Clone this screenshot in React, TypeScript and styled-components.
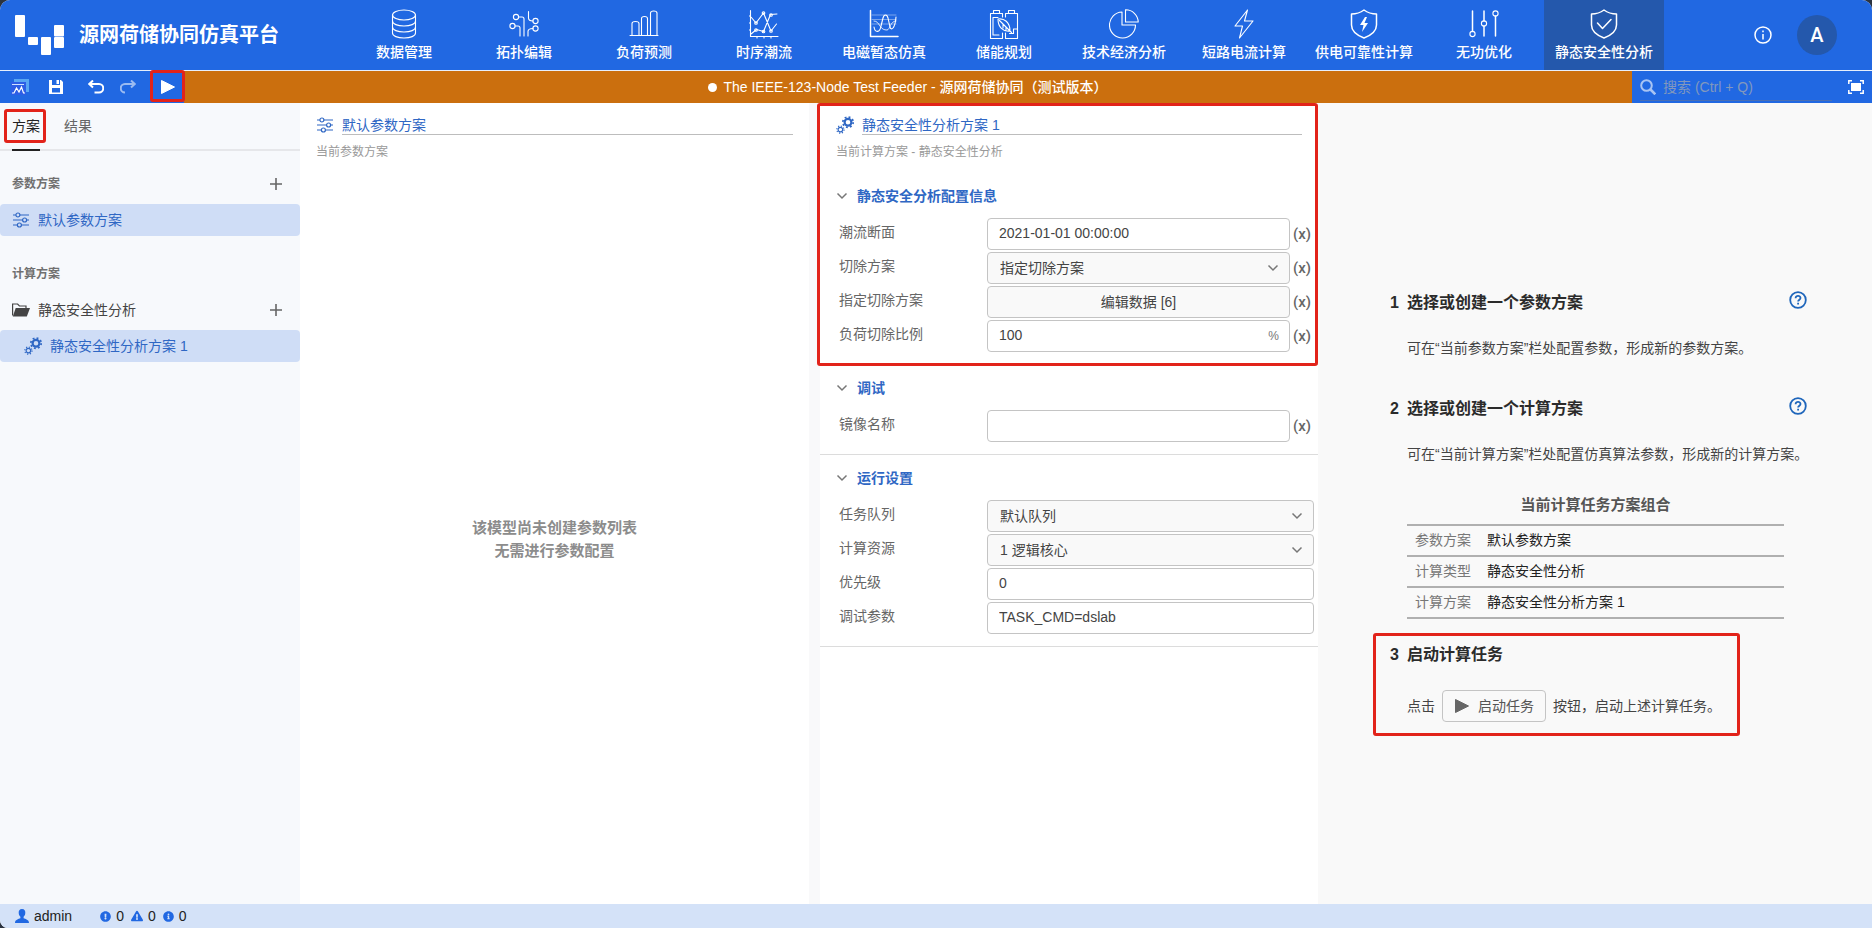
import React from 'react';
import styled, { createGlobalStyle, css } from 'styled-components';
import { FaExclamationCircle, FaExclamationTriangle, FaInfoCircle } from 'react-icons/fa';

const blue = '#2168e2';
const link = '#2f67c4';
const line = '#c4c4c4';

const GlobalStyle = createGlobalStyle`
  *, *::before, *::after { box-sizing: border-box; }
  body {
    margin: 0;
    background: #2b3340;
    color: #444;
    font: 14px/20px "Liberation Sans", "Noto Sans CJK SC", sans-serif;
  }
  button, input, select { font: inherit; color: inherit; margin: 0; }
  h1, h2, h3, p, ol, ul { margin: 0; padding: 0; }
  ol, ul { list-style: none; }
  svg { display: block; flex: none; }
`;

const Page = styled.div`
  display: flex;
  flex-direction: column;
  min-height: 100vh;
  overflow: hidden;
  border-radius: 10px 10px 0 8px;
  background: #fff;
`;

const Callout = styled.span<{ $inset: string }>`
  position: absolute;
  inset: ${(p) => p.$inset};
  border: 3px solid #e2231a;
  border-radius: 3px;
  pointer-events: none;
  z-index: 2;
`;
const FormCallout = styled(Callout)`
  height: 263px;
`;

/* Header */
const Header = styled.header`
  display: flex;
  height: 70px;
  background: ${blue};
  color: #fff;
`;
const Brand = styled.div`
  display: flex;
  align-items: center;
  gap: 14px;
  flex: 1 0 344px;
  padding-left: 15px;
`;
const BrandName = styled.h1`
  font-size: 20px;
  line-height: 28px;
  font-weight: 700;
`;
const Modules = styled.nav`
  display: flex;
`;
const Module = styled.a<{ $active?: boolean }>`
  display: flex;
  flex-direction: column;
  align-items: center;
  gap: 3px;
  width: 120px;
  padding-top: 9px;
  color: #fff;
  font-weight: 500;
  text-decoration: none;
  white-space: nowrap;
  background: ${(p) => (p.$active ? '#2458ac' : 'transparent')};
`;
const Account = styled.div`
  display: flex;
  align-items: center;
  justify-content: flex-end;
  gap: 25px;
  flex: 0 0 208px;
  padding-right: 35px;
`;
const InfoButton = styled.button`
  padding: 0;
  border: 0;
  background: none;
`;
const Avatar = styled.button`
  width: 40px;
  height: 40px;
  padding: 0;
  border: 0;
  border-radius: 50%;
  background: #2458ac;
  font-family: Roboto, sans-serif;
  font-size: 20px;
  font-weight: 500;
`;

/* Toolbar */
const Toolbar = styled.div`
  display: flex;
  height: 33px;
  border-top: 1px solid #e8effc;
  background: ${blue};
  color: #fff;
`;
const Tools = styled.div`
  display: flex;
  gap: 8px;
  padding-left: 8px;
`;
const ToolGroup = styled.div`
  display: flex;
`;
const Tool = styled.button`
  position: relative;
  display: grid;
  place-items: center;
  width: 32px;
  padding: 0;
  border: 0;
  background: none;
  &:disabled { opacity: 0.55; color: #fff; }
`;
const LogoTool = styled(Tool)`
  width: 24px;
`;
const DocumentTitle = styled.div`
  display: flex;
  align-items: center;
  justify-content: center;
  gap: 6px;
  flex: 1;
  background: #cb6f0e;
  font-weight: 500;
`;
const DirtyDot = styled.span`
  width: 9px;
  height: 9px;
  border-radius: 50%;
  background: #fff;
`;
const Search = styled.div`
  display: flex;
  align-items: center;
  flex: 0 0 240px;
  min-width: 0;
  padding: 0 8px;
`;
const SearchField = styled.label`
  display: flex;
  align-items: center;
  gap: 7px;
  flex: 1;
  min-width: 0;
  height: 28px;
  margin-right: 16px;
  border-bottom: 1px solid #4a6fb4;
  color: #a9c4f3;
`;
const SearchInput = styled.input`
  flex: 1;
  width: 100%;
  min-width: 0;
  padding: 0;
  border: 0;
  outline: 0;
  background: none;
  &::placeholder { color: #8298bd; }
`;
const FullscreenButton = styled(InfoButton)``;

/* Body */
const Body = styled.main`
  display: grid;
  grid-template-columns: 300px minmax(0, 509fr) 11px minmax(0, 498fr) minmax(0, 554fr);
  flex: 1;
`;
const Sidebar = styled.aside`
  background: #f7f9fc;
`;
const Tabs = styled.div`
  display: flex;
  gap: 24px;
  height: 48px;
  padding-left: 12px;
  border-bottom: 2px solid #e6e7ea;
  margin-bottom: 17px;
`;
const Tab = styled.button<{ $active?: boolean }>`
  position: relative;
  height: 48px;
  padding: 0;
  border: solid transparent;
  border-width: 0 0 2px;
  background: none;
  color: #666;
  ${(p) => p.$active && css`color: #222; border-color: #222;`}
`;
const GroupHead = styled.div`
  display: flex;
  align-items: center;
  justify-content: space-between;
  height: 32px;
  margin-bottom: 4px;
  padding: 0 18px 0 12px;
`;
const GroupName = styled.h2`
  font-size: 12px;
  line-height: 16px;
  font-weight: 700;
  color: #707070;
`;
const AddButton = styled.button`
  padding: 0;
  border: 0;
  background: none;
  color: #666;
`;
const FolderName = styled.span`
  display: flex;
  align-items: center;
  gap: 8px;
`;
const SchemeItem = styled.button<{ $nested?: boolean }>`
  display: flex;
  align-items: center;
  gap: 8px;
  width: 100%;
  height: 32px;
  margin: ${(p) => (p.$nested ? 0 : 1)}px 0 22px;
  padding: 0 0 0 ${(p) => (p.$nested ? 24 : 12)}px;
  border: 0;
  border-radius: 4px;
  background: #cfddf6;
  color: ${link};
`;

const Panel = styled.section`
  position: relative;
  display: flex;
  flex-direction: column;
`;
const Divider = styled.div`
  background: #f9f9fa;
`;
const PanelHead = styled.div`
  padding: 12px 16px 13px;
`;
const PanelTitle = styled.label`
  display: flex;
  align-items: center;
  gap: 8px;
  margin-bottom: 9px;
  color: ${link};
`;
const PanelName = styled.input`
  flex: 1;
  min-width: 0;
  height: 20px;
  padding: 0;
  border: 0;
  border-bottom: 1px solid #bdbdbd;
  outline: 0;
  background: none;
`;
const PanelNote = styled.p`
  font-size: 12px;
  line-height: 16px;
  color: #999;
`;
const Empty = styled.p`
  display: grid;
  place-content: center;
  flex: 1;
  text-align: center;
  font-size: 15px;
  line-height: 23px;
  font-weight: 700;
  color: #8c8c8c;
`;

const Section = styled.section`
  padding: 0 4px 12px 16px;
  border-bottom: 1px solid #dcdcdc;
`;
const SectionToggle = styled.button`
  display: flex;
  align-items: center;
  gap: 9px;
  height: 45px;
  padding: 0;
  border: 0;
  background: none;
  font-weight: 700;
  color: ${link};
`;
const Rows = styled.div`
  display: grid;
  gap: 2px;
`;
const Row = styled.div`
  display: grid;
  grid-template-columns: 148px minmax(0, 1fr) auto;
  padding-left: 3px;
`;
const RowLabel = styled.label`
  align-self: center;
  padding-bottom: 4px;
  color: #666;
`;
const Control = styled.div`
  position: relative;
  display: flex;
`;
const field = css`
  width: 100%;
  height: 32px;
  padding: 0 12px;
  border: 1px solid ${line};
  border-radius: 4px;
  outline: 0;
  color: #444;
`;
const TextInput = styled.input`
  ${field}
  padding: 0 11px 2px;
  background: #fff;
`;
const Select = styled.select`
  ${field}
  appearance: none;
  background: #f9f9f9;
`;
const DataButton = styled.button`
  ${field}
  background: #f9f9f9;
`;
const Adornment = styled.span`
  position: absolute;
  top: 0;
  right: 11px;
  display: flex;
  align-items: center;
  height: 32px;
  font-size: 12px;
  color: #777;
  pointer-events: none;
`;
const BindButton = styled.button`
  width: 24px;
  padding: 0;
  border: 0;
  background: none;
  font-family: Roboto, sans-serif;
  font-weight: 500;
  font-size: 15px;
  color: #666;
`;

/* Guide */
const Guide = styled.aside`
  display: flex;
  flex-direction: column;
  align-items: center;
  justify-content: center;
  padding-top: 5px;
  background: #f9f9f9;
`;
const Steps = styled.ol`
  width: 424px;
`;
const Step = styled.li`
  position: relative;
  display: grid;
  grid-template-columns: 17px minmax(0, 1fr);
  padding-left: 7px;
  & + & { margin-top: 39px; }
  &:last-child { margin-top: 24px; }
`;
const StepText = styled.h2`
  font-size: 16px;
  line-height: 24px;
  font-weight: 700;
  color: #2b2b2b;
`;
const StepHead = styled.div`
  display: flex;
  justify-content: space-between;
  margin-bottom: 23px;
`;
const HelpButton = styled.button`
  height: 18px;
  padding: 0;
  border: 0;
  background: none;
  color: #1f66bb;
`;
const StepBody = styled.div`
  grid-column: 2;
  white-space: nowrap;
`;
const Summary = styled.table`
  width: calc(100% - 23px);
  margin-top: 31px;
  border-collapse: collapse;
  color: #222;
  caption {
    padding-bottom: 9px;
    font-size: 15px;
    font-weight: 700;
    color: #555;
  }
  tr { border: solid #b0b0b0; border-width: 2px 0; }
  th, td { height: 31px; padding: 0 8px; text-align: left; font-weight: 400; }
  th { width: 72px; color: #777; }
`;
const LaunchLine = styled.div`
  display: flex;
  align-items: center;
  gap: 7px;
`;
const LaunchButton = styled.button`
  display: flex;
  align-items: center;
  gap: 9px;
  height: 32px;
  padding: 0 11px 0 12px;
  border: 1px solid ${line};
  border-radius: 4px;
  background: #f9f9f9;
  color: #555;
`;

/* Status bar */
const Footer = styled.footer`
  display: flex;
  align-items: center;
  gap: 28px;
  height: 24px;
  padding-left: 15px;
  background: #d4e2f8;
  color: #222;
`;
const Counts = styled.div`
  display: flex;
  gap: 7px;
`;
const Count = styled.span`
  display: flex;
  align-items: center;
  gap: 5px;
  svg { color: ${blue}; }
`;

/* Icons */
const Logo = () => (
  <svg width="50" height="41" viewBox="0 0 50 41" fill="#fff" aria-hidden>
    <rect width="10" height="22" rx="1" />
    <rect x="13" y="22" width="10" height="8" rx="1" />
    <rect x="26" y="22" width="10" height="18" rx="1" />
    <rect x="39" y="10" width="10" height="11.500" rx="1" />
    <rect x="39" y="22" width="10" height="11" rx="1" />
  </svg>
);

const ModuleIcon = ({ children }: { children: React.ReactNode }) => (
  <svg width="30" height="30" viewBox="0 0 30 30" fill="none" stroke="#fff" strokeWidth="1.1" strokeLinejoin="round" strokeLinecap="round" aria-hidden>
    {children}
  </svg>
);

const modules = [
  {
    name: '数据管理',
    icon: (
      <>
        <ellipse cx="15" cy="6" rx="11.5" ry="5" />
        <path d="M3.500 6v18c0 3 5 5 11.500 5s11.500-2 11.500-5V6M3.500 12c0 3 5 5 11.500 5s11.500-2 11.500-5M3.500 18c0 3 5 5 11.500 5s11.500-2 11.500-5" />
      </>
    ),
  },
  {
    name: '拓扑编辑',
    icon: (
      <>
        <circle cx="7" cy="8" r="2.600" /><circle cx="3.500" cy="17" r="2.600" />
        <circle cx="26.500" cy="12" r="2.600" /><circle cx="26.500" cy="19.500" r="2.600" />
        <path d="M9.600 8H13c1.500 0 2 1 2 2v17M6 17h3c1.500 0 2 1 2 2v8M19.500 2.500V9c0 2 1 3 4.500 3M24 19.500c-4 0-5 1-5 3V27" />
      </>
    ),
  },
  {
    name: '负荷预测',
    icon: <path d="M1 26.500h28M3 26V14.500c0-1 1-2 3.500-2s3.500 1 3.500 2V26M12.500 26V9.500c0-1 1-2 3-2s3 1 3 2V26M21.500 26V4c0-1 1-2 3.200-2S28 3 28 4v22" />,
  },
  {
    name: '时序潮流',
    icon: (
      <>
        <path d="M1.500 1.500v26H29M1.500 7H0M1.500 14H0M1.500 21H0M8 27.500V29M15 27.500V29M22 27.500V29M2 8l5 6 7.500-10 7.500 18 5.500-7M2 25l5.500-4.500 7 2 7-17L28 5" />
        <circle cx="7" cy="14" r="1.300" /><circle cx="14.500" cy="4" r="1.300" /><circle cx="22" cy="22" r="1.300" />
        <circle cx="7" cy="21" r="1.300" /><circle cx="14.500" cy="22.500" r="1.300" /><circle cx="22" cy="6" r="1.300" />
      </>
    ),
  },
  {
    name: '电磁暂态仿真',
    icon: (
      <>
        <path d="M1.500 1.500v26H29" strokeWidth="1.500" />
        <path d="M3 6h24M3 10.500h24M3 15h24" opacity=".5" strokeWidth=".8" />
        <path d="M5 18c1 6 6 6 7-1l2-8c1-4 4-4 5 0l2 9c1 4 5 2 6-10" />
        <path d="M5 12c3 0 4 2 6 5s4 4 7 4 3-9 9-9" strokeWidth=".8" />
      </>
    ),
  },
  {
    name: '储能规划',
    icon: (
      <>
        <path d="M4.500 4V1.500h6V4M19.500 4V1.500h6V4M13.500 8V4.500h-12v25h12V24M16.500 8V4.500h12V20h-4v4.500h-4M16.500 24v5.500h12V20M4 8.500h5M4 8.500V26h6" />
        <path d="M9 10c6-1 12 3 12 12-7 1-12-4-12-12zM10.500 11.500l12 12M14 15v4M17 18v3" />
      </>
    ),
  },
  {
    name: '技术经济分析',
    icon: <path d="M13 3a13 13 0 1 0 13.500 13H13zM16.500.8V13h12.700A12.500 12.500 0 0 0 16.500.8z" />,
  },
  { name: '短路电流计算', icon: <path d="M18.500 1 6 17h7.500L10.500 29 24 12h-8.500z" /> },
  {
    name: '供电可靠性计算',
    icon: (
      <>
        <path d="M15 1c4 3 8 4 12.500 4v11c0 6-6 10.500-12.500 13C8.500 26.500 2.500 22 2.500 16V5C7 5 11 4 15 1z" strokeWidth="1.500" />
        <path d="M16 8l-5 8h3.500L13 23l6-9h-3.500L18 8z" fill="#fff" stroke="none" />
      </>
    ),
  },
  {
    name: '无功优化',
    icon: (
      <>
        <circle cx="3.500" cy="25" r="2.600" /><circle cx="15" cy="14.500" r="2.600" /><circle cx="26.500" cy="4.500" r="2.600" />
        <path d="M3.500 2v20.400M15 2v10M15 17.100V27M26.500 7.100V27" strokeWidth="1.500" />
      </>
    ),
  },
  {
    name: '静态安全性分析',
    icon: (
      <>
        <path d="M15 1c4 3 8 4 12.500 4v11c0 6-6 10.500-12.500 13C8.500 26.500 2.500 22 2.500 16V5C7 5 11 4 15 1z" strokeWidth="1.500" />
        <path d="M8.500 14l5 5.500L22 10.500" strokeWidth="1.500" />
      </>
    ),
  },
];

const InfoIcon = () => (
  <svg width="18" height="18" viewBox="0 0 18 18" fill="none" stroke="#fff" strokeWidth="1.500" aria-hidden>
    <circle cx="9" cy="9" r="8" />
    <path d="M9 8v5.500M9 4.500v1.700" />
  </svg>
);

const AppIcon = () => (
  <svg width="18" height="16" viewBox="0 0 18 16" fill="none" aria-hidden>
    <path d="M3 0h15v13h-3V3H3z" fill="#58a6f3" />
    <path d="M0 3h15v13H0z" fill="#2d5ee6" />
    <path d="M1 5.500h12" stroke="#cfe0ff" />
    <path d="M1 14h2l2.500-5 2.500 4 2.500-5 2 6H14" stroke="#fff" strokeWidth="1.200" />
  </svg>
);

const SaveIcon = () => (
  <svg width="14" height="14" viewBox="0 0 14 14" aria-hidden>
    <path fill="#fff" fillRule="evenodd" d="M0 0h3v5h8V0h1l2 2v12H0zM3 8v4.500h8V8zM7.500 0H10v4H7.500z" />
  </svg>
);

const UndoIcon = ({ redo }: { redo?: boolean }) => (
  <svg width="16" height="14" viewBox="0 0 16 14" fill="none" stroke="#fff" strokeWidth="2" aria-hidden>
    <path d={redo ? 'M14.500 4H5a4.200 4.200 0 0 0 0 8.500M11 .5 14.700 4 11 7.500' : 'M1.500 4H11a4.200 4.200 0 0 1 0 8.500H6.500M5 .5 1.300 4 5 7.500'} />
  </svg>
);

const PlayIcon = ({ color }: { color: string }) => (
  <svg width="14" height="14" viewBox="0 0 14 14" aria-hidden>
    <path d="M0.500 0.500v13L13.500 7z" fill={color} stroke={color} strokeLinejoin="round" />
  </svg>
);

const SearchIcon = () => (
  <svg width="16" height="16" viewBox="0 0 16 16" fill="none" stroke="currentColor" strokeWidth="2" aria-hidden>
    <circle cx="6.500" cy="6.500" r="5.300" />
    <path d="M10.500 10.500l4.800 4.800" strokeWidth="2.600" />
  </svg>
);

const FullscreenIcon = () => (
  <svg width="16" height="14" viewBox="0 0 16 14" fill="none" stroke="#fff" strokeWidth="1.500" aria-hidden>
    <path d="M.8 4V.8H4M12 .8h3.200V4M15.200 10v3.200H12M4 13.200H.8V10" />
    <path d="M3 3h10v8H3z" fill="#fff" stroke="none" />
  </svg>
);

const SlidersIcon = () => (
  <svg width="18" height="16" viewBox="0 0 18 16" fill="none" stroke="currentColor" strokeWidth="1.200" aria-hidden>
    <path d="M1 3h2.800M8 3h9M1 8h9.500M14.700 8H17M1 13h4.300M9.500 13H17" />
    <circle cx="5.900" cy="3" r="2" /><circle cx="12.600" cy="8" r="2" /><circle cx="7.400" cy="13" r="2" />
  </svg>
);

const GearsIcon = () => (
  <svg width="18" height="18" viewBox="0 0 18 18" fill="none" stroke="currentColor" aria-hidden>
    <circle cx="12" cy="6.200" r="3.400" strokeWidth="2.200" />
    <circle cx="12" cy="6.200" r="5.200" strokeWidth="1.700" strokeDasharray="1.900 2.180" />
    <circle cx="4.400" cy="13.600" r="2.300" strokeWidth="1.200" />
    <circle cx="4.400" cy="13.600" r="3.600" strokeWidth="1.200" strokeDasharray="1.200 1.630" />
  </svg>
);

const FolderIcon = () => (
  <svg width="18" height="14" viewBox="0 0 18 14" aria-hidden>
    <path d="M.6 12.500V1h5l1.800 2H14v2.500" fill="none" stroke="#444" strokeWidth="1.200" />
    <path d="M3.700 5H18l-3.200 8.500H.8z" fill="#444" />
  </svg>
);

const PlusIcon = () => (
  <svg width="12" height="12" viewBox="0 0 12 12" stroke="currentColor" strokeWidth="1.600" aria-hidden>
    <path d="M6 0v12M0 6h12" />
  </svg>
);

const Chevron = () => (
  <svg width="12" height="8" viewBox="0 0 12 8" fill="none" stroke="#777" strokeWidth="1.500" aria-hidden>
    <path d="M1.500 1.500 6 6l4.500-4.500" />
  </svg>
);

const HelpIcon = () => (
  <svg width="18" height="18" viewBox="0 0 18 18" fill="none" stroke="currentColor" strokeWidth="1.800" aria-hidden>
    <circle cx="9" cy="9" r="7.800" />
    <path d="M6.600 7.200c0-3.200 4.900-3 4.900-.2 0 1.700-2.400 1.700-2.400 3.600M9.100 11.800v1.700" />
  </svg>
);

const UserIcon = () => (
  <svg width="14" height="14" viewBox="0 0 14 14" fill={blue} aria-hidden>
    <path d="M7 0C4.500 0 3.500 1.800 3.700 4c.1 1.800.8 3 1.700 3.800v1.500C3.500 10.200 0 10.500 0 14h14c0-3.500-3.500-3.800-5.400-4.700V7.800c.9-.8 1.600-2 1.700-3.800C10.500 1.800 9.500 0 7 0z" />
  </svg>
);

type FieldProps = {
  id: string;
  label: string;
  kind?: 'text' | 'select' | 'data';
  value?: string;
  unit?: string;
  bindable?: boolean;
};

const Field = ({ id, label, kind = 'text', value = '', unit, bindable }: FieldProps) => (
  <Row>
    <RowLabel htmlFor={id}>{label}</RowLabel>
    <Control>
      {kind === 'text' && <TextInput id={id} defaultValue={value} />}
      {kind === 'data' && <DataButton id={id} type="button">{value}</DataButton>}
      {kind === 'select' && (
        <Select id={id} defaultValue={value}>
          <option>{value}</option>
        </Select>
      )}
      {kind === 'select' && <Adornment><Chevron /></Adornment>}
      {unit && <Adornment>{unit}</Adornment>}
    </Control>
    {bindable && <BindButton type="button" aria-label={`${label}表达式`}>(x)</BindButton>}
  </Row>
);

const FieldSection = ({ title, children }: { title: string; children: React.ReactNode }) => (
  <Section>
    <SectionToggle type="button" aria-expanded>
      <Chevron />
      {title}
    </SectionToggle>
    <Rows>{children}</Rows>
  </Section>
);

export default function App() {
  return (
    <Page>
      <GlobalStyle />
      <Header>
        <Brand>
          <Logo />
          <BrandName>源网荷储协同仿真平台</BrandName>
        </Brand>
        <Modules>
          {modules.map((m, i) => (
            <Module key={m.name} href="#" $active={i === modules.length - 1}>
              <ModuleIcon>{m.icon}</ModuleIcon>
              {m.name}
            </Module>
          ))}
        </Modules>
        <Account>
          <InfoButton type="button" aria-label="关于"><InfoIcon /></InfoButton>
          <Avatar type="button">A</Avatar>
        </Account>
      </Header>

      <Toolbar>
        <Tools>
          <LogoTool type="button" aria-label="主页"><AppIcon /></LogoTool>
          <Tool type="button" aria-label="保存"><SaveIcon /></Tool>
          <ToolGroup>
            <Tool type="button" aria-label="撤销"><UndoIcon /></Tool>
            <Tool type="button" aria-label="重做" disabled><UndoIcon redo /></Tool>
          </ToolGroup>
          <Tool type="button" aria-label="运行">
            <PlayIcon color="#fff" />
            <Callout $inset="-1px -1px 1px -2px" />
          </Tool>
        </Tools>
        <DocumentTitle>
          <DirtyDot />
          The IEEE-123-Node Test Feeder - 源网荷储协同（测试版本）
        </DocumentTitle>
        <Search>
          <SearchField>
            <SearchIcon />
            <SearchInput type="search" placeholder="搜索 (Ctrl + Q)" aria-label="搜索" />
          </SearchField>
          <FullscreenButton type="button" aria-label="全屏"><FullscreenIcon /></FullscreenButton>
        </Search>
      </Toolbar>

      <Body>
        <Sidebar>
          <Tabs>
            <Tab type="button" $active>
              方案
              <Callout $inset="6px -6px 6px -8px" />
            </Tab>
            <Tab type="button">结果</Tab>
          </Tabs>
          <GroupHead>
            <GroupName>参数方案</GroupName>
            <AddButton type="button" aria-label="新建参数方案"><PlusIcon /></AddButton>
          </GroupHead>
          <SchemeItem type="button"><SlidersIcon />默认参数方案</SchemeItem>
          <GroupHead>
            <GroupName>计算方案</GroupName>
          </GroupHead>
          <GroupHead>
            <FolderName><FolderIcon />静态安全性分析</FolderName>
            <AddButton type="button" aria-label="新建计算方案"><PlusIcon /></AddButton>
          </GroupHead>
          <SchemeItem type="button" $nested><GearsIcon />静态安全性分析方案 1</SchemeItem>
        </Sidebar>

        <Panel>
          <PanelHead>
            <PanelTitle>
              <SlidersIcon />
              <PanelName defaultValue="默认参数方案" aria-label="参数方案名称" />
            </PanelTitle>
            <PanelNote>当前参数方案</PanelNote>
          </PanelHead>
          <Empty>
            该模型尚未创建参数列表
            <br />
            无需进行参数配置
          </Empty>
        </Panel>

        <Divider />

        <Panel>
          <PanelHead>
            <PanelTitle>
              <GearsIcon />
              <PanelName defaultValue="静态安全性分析方案 1" aria-label="计算方案名称" />
            </PanelTitle>
            <PanelNote>当前计算方案 - 静态安全性分析</PanelNote>
          </PanelHead>
          <FieldSection title="静态安全分析配置信息">
            <Field id="snapshot" label="潮流断面" value="2021-01-01 00:00:00" bindable />
            <Field id="cut" label="切除方案" kind="select" value="指定切除方案" bindable />
            <Field id="cut-data" label="指定切除方案" kind="data" value="编辑数据 [6]" bindable />
            <Field id="ratio" label="负荷切除比例" value="100" unit="%" bindable />
          </FieldSection>
          <FieldSection title="调试">
            <Field id="image" label="镜像名称" bindable />
          </FieldSection>
          <FieldSection title="运行设置">
            <Field id="queue" label="任务队列" kind="select" value="默认队列" />
            <Field id="cores" label="计算资源" kind="select" value="1 逻辑核心" />
            <Field id="priority" label="优先级" value="0" />
            <Field id="args" label="调试参数" value="TASK_CMD=dslab" />
          </FieldSection>
          <FormCallout $inset="0 0 auto -3px" />
        </Panel>

        <Guide>
          <Steps>
            <Step>
              <StepText as="span">1</StepText>
              <StepHead>
                <StepText>选择或创建一个参数方案</StepText>
                <HelpButton type="button" aria-label="参数方案帮助"><HelpIcon /></HelpButton>
              </StepHead>
              <StepBody>可在“当前参数方案”栏处配置参数，形成新的参数方案。</StepBody>
            </Step>
            <Step>
              <StepText as="span">2</StepText>
              <StepHead>
                <StepText>选择或创建一个计算方案</StepText>
                <HelpButton type="button" aria-label="计算方案帮助"><HelpIcon /></HelpButton>
              </StepHead>
              <StepBody>
                可在“当前计算方案”栏处配置仿真算法参数，形成新的计算方案。
                <Summary>
                  <caption>当前计算任务方案组合</caption>
                  <tbody>
                    <tr><th scope="row">参数方案</th><td>默认参数方案</td></tr>
                    <tr><th scope="row">计算类型</th><td>静态安全性分析</td></tr>
                    <tr><th scope="row">计算方案</th><td>静态安全性分析方案 1</td></tr>
                  </tbody>
                </Summary>
              </StepBody>
            </Step>
            <Step>
              <StepText as="span">3</StepText>
              <StepHead>
                <StepText>启动计算任务</StepText>
              </StepHead>
              <StepBody>
                <LaunchLine>
                  点击
                  <LaunchButton type="button"><PlayIcon color="#666" />启动任务</LaunchButton>
                  按钮，启动上述计算任务。
                </LaunchLine>
              </StepBody>
              <Callout $inset="-10px 67px -14px -10px" />
            </Step>
          </Steps>
        </Guide>
      </Body>

      <Footer>
        <Count><UserIcon />admin</Count>
        <Counts>
          <Count><FaExclamationCircle size={11} />0</Count>
          <Count><FaExclamationTriangle size={12} />0</Count>
          <Count><FaInfoCircle size={11} />0</Count>
        </Counts>
      </Footer>
    </Page>
  );
}
